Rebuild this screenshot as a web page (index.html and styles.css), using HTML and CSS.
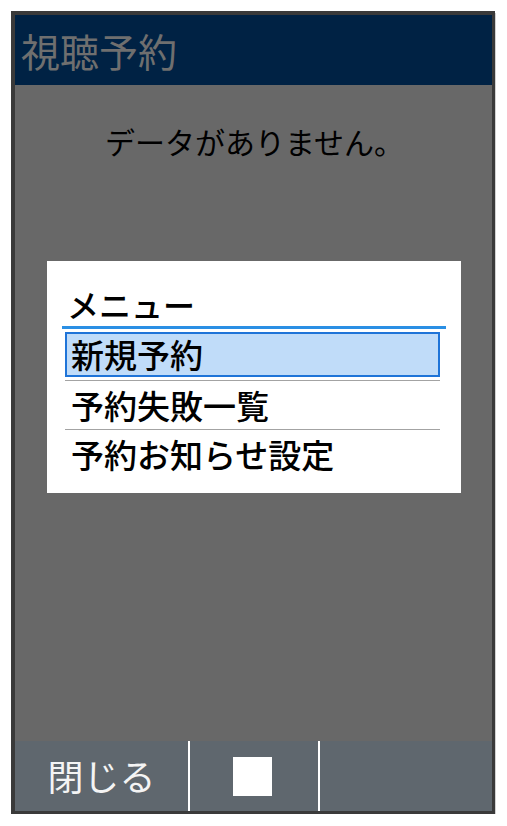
FILE: index.html
```html
<!DOCTYPE html>
<html>
  <head>
    <meta charset="utf-8">
    <title>視聴予約</title>
    <link rel="stylesheet" href="styles.css">
  </head>
  <body>
    <div id="phone">
      <div class="titlebar">視聴予約</div>
      <div class="content">
        <div class="message">データがありません。</div>

        <!-- menu popup over the list -->
        <div id="menu">
          <div class="menuTitle">メニュー</div>
          <div class="menuList">
            <div class="item selected"><span class="label">新規予約</span></div>
            <div class="item"><span class="label">予約失敗一覧</span></div>
            <div class="item last"><span class="label">予約お知らせ設定</span></div>
          </div>
        </div>
      </div>
      <div class="softkeys">
        <div class="key left">閉じる</div>
        <div class="key center"><span class="square"></span></div>
        <div class="key right"></div>
      </div>
    </div>
  </body>
</html>
```

FILE: styles.css
```css
  body {
    font-family: "Noto Sans CJK JP", "Noto Sans", sans-serif;
    margin: 0;
    padding: 0;
    background: #fff;
  }

  /* device frame */
  #phone {
    margin: 11px 0 0 11px;
    width: 477px;
    height: 796px;
    border-style: solid;
    border-color: #3a3a3a;
    border-width: 4px 3px 3px 4px;
    box-shadow: 1px 2px 0 #d2d2d2;
    display: flex;
    flex-direction: column;
  }

  .titlebar {
    height: 70px;
    background: #002244;
    color: #6f6f6f;
    font-size: 39px;
    line-height: 70px;
    padding-left: 6px;
    box-shadow: 0 1px 0 #4a4f55;
  }

  .content {
    flex: 1;
    position: relative;
    background: #686868;
  }

  .message {
    padding-top: 38px;
    font-size: 30px;
    line-height: 36px;
    text-align: center;
    color: #000;
    padding-left: 2px;
  }

#menu {
  position: absolute;
  left: 32px;
  top: 176px;
  width: 414px;
  height: 232px;
  background: #fff;
}

.menuTitle {
  margin: 0 15px;
  padding: 26px 0 5px 5px;
  font-size: 32px;
  font-weight: 500;
  line-height: 34px;
  color: #000;
  border-bottom: 3px solid #2a8fe4;
}

.menuList {
  margin: 3px 21px 0 18px;
}

.item {
  height: 48px;
  border-bottom: 1px solid #a3a3a3;
  font-size: 33px;
  font-weight: 500;
  color: #000;
}
.item.last {
  border-bottom: none;
}
.item .label {
  display: block;
  height: 100%;
  line-height: 48px;
  padding-left: 6px;
  box-sizing: border-box;
}
.item.selected .label {
  height: 45px;
  margin-top: 1px;
  line-height: 41px;
  padding-left: 4px;
  background: #c0dcf9;
  border: 2px solid #1f74d8;
}

.softkeys {
  height: 70px;
  background: #5f676e;
  display: flex;
}
.key {
  display: flex;
  align-items: center;
  justify-content: center;
  color: #f4f4f4;
  font-size: 36px;
}
.key.left {
  width: 173px;
  border-right: 2px solid #fff;
  padding-bottom: 2px;
}
.key.center {
  width: 128px;
  border-right: 2px solid #fff;
}
.key.right {
  flex: 1;
}
.square {
  display: block;
  width: 39px;
  height: 39px;
  background: #fff;
  margin-left: -3px;
}
```
